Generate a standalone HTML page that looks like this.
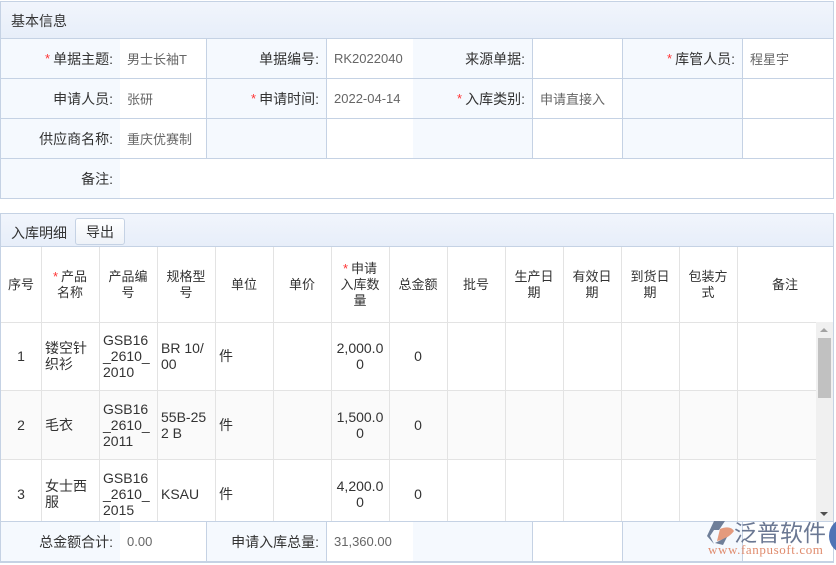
<!DOCTYPE html>
<html><head><meta charset="utf-8"><style>
*{box-sizing:border-box;margin:0;padding:0}
body{width:836px;height:565px;background:#fff;position:relative;overflow:hidden;font-family:"Liberation Sans","Noto Sans CJK SC",sans-serif;font-size:13px;color:#333}
.a{position:absolute}
.hd{background:linear-gradient(#f1f5fc,#e7eef9);border:1px solid #c5d2e4}
.c{position:absolute;border-right:1px solid #c5d2e4;border-bottom:1px solid #c5d2e4;display:flex;align-items:center;padding:0 7px}
.l{background:#f5f9fe;justify-content:flex-end;color:#333;font-size:14px}
.v{background:#fff;color:#666}
.s{color:#f33;margin-right:3px;font-size:13px}
.g{position:absolute;border-right:1px solid #e3e3e3;border-bottom:1px solid #e3e3e3;display:flex;align-items:center;justify-content:center;text-align:center;line-height:16px;padding:0 4px;color:#333}
.d{font-size:14px;line-height:16px;white-space:nowrap}
.lf{justify-content:flex-start;text-align:left}
</style></head><body>
<div class="a hd" style="left:0;top:1px;width:834px;height:38px"></div>
<div class="a" style="left:11px;top:11px;font-size:14px">基本信息</div>
<div class="a" style="left:0;top:38px;width:834px;height:161px;border-left:1px solid #c5d2e4"></div>

<div class="c l" style="left:1px;top:39px;width:120px;height:40px"><span class="s">*</span>单据主题:</div>
<div class="c v" style="left:120px;top:39px;width:87px;height:40px">男士长袖T</div>
<div class="c l" style="left:207px;top:39px;width:120px;height:40px">单据编号:</div>
<div class="c v" style="left:327px;top:39px;width:87px;height:40px">RK2022040</div>
<div class="c l" style="left:413px;top:39px;width:120px;height:40px">来源单据:</div>
<div class="c v" style="left:533px;top:39px;width:90px;height:40px"></div>
<div class="c l" style="left:623px;top:39px;width:120px;height:40px"><span class="s">*</span>库管人员:</div>
<div class="c v" style="left:743px;top:39px;width:91px;height:40px">程星宇</div>

<div class="c l" style="left:1px;top:79px;width:120px;height:40px">申请人员:</div>
<div class="c v" style="left:120px;top:79px;width:87px;height:40px">张研</div>
<div class="c l" style="left:207px;top:79px;width:120px;height:40px"><span class="s">*</span>申请时间:</div>
<div class="c v" style="left:327px;top:79px;width:87px;height:40px">2022-04-14</div>
<div class="c l" style="left:413px;top:79px;width:120px;height:40px"><span class="s">*</span>入库类别:</div>
<div class="c v" style="left:533px;top:79px;width:90px;height:40px">申请直接入</div>
<div class="c l" style="left:623px;top:79px;width:120px;height:40px"></div>
<div class="c v" style="left:743px;top:79px;width:91px;height:40px"></div>

<div class="c l" style="left:1px;top:119px;width:120px;height:40px">供应商名称:</div>
<div class="c v" style="left:120px;top:119px;width:87px;height:40px">重庆优赛制</div>
<div class="c l" style="left:207px;top:119px;width:120px;height:40px"></div>
<div class="c v" style="left:327px;top:119px;width:87px;height:40px"></div>
<div class="c l" style="left:413px;top:119px;width:120px;height:40px"></div>
<div class="c v" style="left:533px;top:119px;width:90px;height:40px"></div>
<div class="c l" style="left:623px;top:119px;width:120px;height:40px"></div>
<div class="c v" style="left:743px;top:119px;width:91px;height:40px"></div>

<div class="c l" style="left:1px;top:159px;width:120px;height:40px">备注:</div>
<div class="c v" style="left:120px;top:159px;width:714px;height:40px"></div>

<div class="a hd" style="left:0;top:213px;width:834px;height:34px"></div>
<div class="a" style="left:11px;top:223px;font-size:14px">入库明细</div>
<div class="a" style="left:75px;top:218px;width:50px;height:27px;border:1px solid #c5d2e4;border-radius:3px;background:linear-gradient(#fff,#eef2f8);display:flex;align-items:center;justify-content:center;font-size:14px">导出</div>
<div class="a" style="left:0;top:246px;width:834px;height:276px;border-left:1px solid #c5d2e4;border-right:1px solid #c5d2e4"></div>

<div class="g" style="left:1px;top:247px;width:41px;height:76px">序号</div>
<div class="g" style="left:41px;top:247px;width:59px;height:76px"><span><span class="s">*</span>产品<br>名称</span></div>
<div class="g" style="left:99px;top:247px;width:59px;height:76px">产品编号</div>
<div class="g" style="left:157px;top:247px;width:59px;height:76px">规格型号</div>
<div class="g" style="left:215px;top:247px;width:59px;height:76px">单位</div>
<div class="g" style="left:273px;top:247px;width:59px;height:76px">单价</div>
<div class="g" style="left:331px;top:247px;width:59px;height:76px"><span><span class="s">*</span>申请<br>入库数<br>量</span></div>
<div class="g" style="left:389px;top:247px;width:59px;height:76px">总金额</div>
<div class="g" style="left:447px;top:247px;width:59px;height:76px">批号</div>
<div class="g" style="left:505px;top:247px;width:59px;height:76px">生产日<br>期</div>
<div class="g" style="left:563px;top:247px;width:59px;height:76px">有效日<br>期</div>
<div class="g" style="left:621px;top:247px;width:59px;height:76px">到货日<br>期</div>
<div class="g" style="left:679px;top:247px;width:59px;height:76px">包装方<br>式</div>
<div class="g" style="left:737px;top:247px;width:96px;height:76px;border-right:none">备注</div>

<div class="a" style="left:1px;top:391px;width:816px;height:69px;background:#fafafa"></div>
<div class="g d" style="left:1px;top:322px;width:41px;height:69px">1</div>
<div class="g lf d" style="left:41px;top:322px;width:59px;height:69px">镂空针<br>织衫</div>
<div class="g lf d" style="left:99px;top:322px;width:59px;height:69px">GSB16<br>_2610_<br>2010</div>
<div class="g lf d" style="left:157px;top:322px;width:59px;height:69px">BR 10/<br>00</div>
<div class="g lf d" style="left:215px;top:322px;width:59px;height:69px">件</div>
<div class="g" style="left:273px;top:322px;width:59px;height:69px"></div>
<div class="g d" style="left:331px;top:322px;width:59px;height:69px">2,000.0<br>0</div>
<div class="g d" style="left:389px;top:322px;width:59px;height:69px">0</div>
<div class="g" style="left:447px;top:322px;width:59px;height:69px"></div>
<div class="g" style="left:505px;top:322px;width:59px;height:69px"></div>
<div class="g" style="left:563px;top:322px;width:59px;height:69px"></div>
<div class="g" style="left:621px;top:322px;width:59px;height:69px"></div>
<div class="g" style="left:679px;top:322px;width:59px;height:69px"></div>
<div class="g" style="left:737px;top:322px;width:80px;height:69px;border-right:none"></div>

<div class="g d" style="left:1px;top:391px;width:41px;height:69px">2</div>
<div class="g lf d" style="left:41px;top:391px;width:59px;height:69px">毛衣</div>
<div class="g lf d" style="left:99px;top:391px;width:59px;height:69px">GSB16<br>_2610_<br>2011</div>
<div class="g lf d" style="left:157px;top:391px;width:59px;height:69px">55B-25<br>2 B</div>
<div class="g lf d" style="left:215px;top:391px;width:59px;height:69px">件</div>
<div class="g" style="left:273px;top:391px;width:59px;height:69px"></div>
<div class="g d" style="left:331px;top:391px;width:59px;height:69px">1,500.0<br>0</div>
<div class="g d" style="left:389px;top:391px;width:59px;height:69px">0</div>
<div class="g" style="left:447px;top:391px;width:59px;height:69px"></div>
<div class="g" style="left:505px;top:391px;width:59px;height:69px"></div>
<div class="g" style="left:563px;top:391px;width:59px;height:69px"></div>
<div class="g" style="left:621px;top:391px;width:59px;height:69px"></div>
<div class="g" style="left:679px;top:391px;width:59px;height:69px"></div>
<div class="g" style="left:737px;top:391px;width:80px;height:69px;border-right:none"></div>

<div class="g d" style="left:1px;top:460px;width:41px;height:68px;border-bottom:none">3</div>
<div class="g lf d" style="left:41px;top:460px;width:59px;height:68px;border-bottom:none">女士西<br>服</div>
<div class="g lf d" style="left:99px;top:460px;width:59px;height:68px;border-bottom:none">GSB16<br>_2610_<br>2015</div>
<div class="g lf d" style="left:157px;top:460px;width:59px;height:68px;border-bottom:none">KSAU</div>
<div class="g lf d" style="left:215px;top:460px;width:59px;height:68px;border-bottom:none">件</div>
<div class="g" style="left:273px;top:460px;width:59px;height:62px;border-bottom:none"></div>
<div class="g d" style="left:331px;top:460px;width:59px;height:68px;border-bottom:none">4,200.0<br>0</div>
<div class="g d" style="left:389px;top:460px;width:59px;height:68px;border-bottom:none">0</div>
<div class="g" style="left:447px;top:460px;width:59px;height:62px;border-bottom:none"></div>
<div class="g" style="left:505px;top:460px;width:59px;height:62px;border-bottom:none"></div>
<div class="g" style="left:563px;top:460px;width:59px;height:62px;border-bottom:none"></div>
<div class="g" style="left:621px;top:460px;width:59px;height:62px;border-bottom:none"></div>
<div class="g" style="left:679px;top:460px;width:59px;height:62px;border-bottom:none"></div>

<div class="a" style="left:816px;top:322px;width:17px;height:200px;background:#f0f0f0"></div>
<div class="a" style="left:818px;top:338px;width:13px;height:60px;background:#c1c1c1"></div>
<div class="a" style="left:820px;top:328px;width:0;height:0;border-left:4px solid transparent;border-right:4px solid transparent;border-bottom:4px solid #a3a3a3"></div>
<div class="a" style="left:820px;top:512px;width:0;height:0;border-left:4px solid transparent;border-right:4px solid transparent;border-top:4px solid #505050"></div>

<div class="a" style="left:0;top:521px;width:834px;height:42px;border:1px solid #c5d2e4;border-right:none;background:#fff"></div>
<div class="c l" style="left:1px;top:522px;width:120px;height:40px">总金额合计:</div>
<div class="c v" style="left:120px;top:522px;width:87px;height:40px">0.00</div>
<div class="c l" style="left:207px;top:522px;width:120px;height:40px">申请入库总量:</div>
<div class="c v" style="left:327px;top:522px;width:87px;height:40px">31,360.00</div>
<div class="c l" style="left:413px;top:522px;width:120px;height:40px"></div>
<div class="c v" style="left:533px;top:522px;width:90px;height:40px"></div>
<div class="c l" style="left:623px;top:522px;width:120px;height:40px"></div>
<div class="c v" style="left:743px;top:522px;width:91px;height:40px"></div>

<svg class="a" style="left:706px;top:520px" width="30" height="26" viewBox="0 0 30 26">
<path d="M8 1 L19 1 L13 10 L8 10 L4 16 L8 24 L1 16 Z" fill="#6f7f99"/>
<path d="M14 9 Q24 5 28 11 Q22 19 11 21 Z" fill="#e49a7d"/>
<path d="M9 23 L21 17 L17 25 Z" fill="#6f7f99"/>
</svg>
<div class="a" style="left:734px;top:518px;font-size:23px;color:#6b7893;font-family:'Noto Sans CJK SC',sans-serif;line-height:26px">泛普软件</div>
<div class="a" style="left:708px;top:542px;font-size:13px;color:#e08c6e;font-family:'Liberation Serif',serif;letter-spacing:.6px">www.fanpusoft.com</div>
<div class="a" style="left:829px;top:519px;width:30px;height:34px;border-radius:50%;background:#4f73b5"></div>
</body></html>
